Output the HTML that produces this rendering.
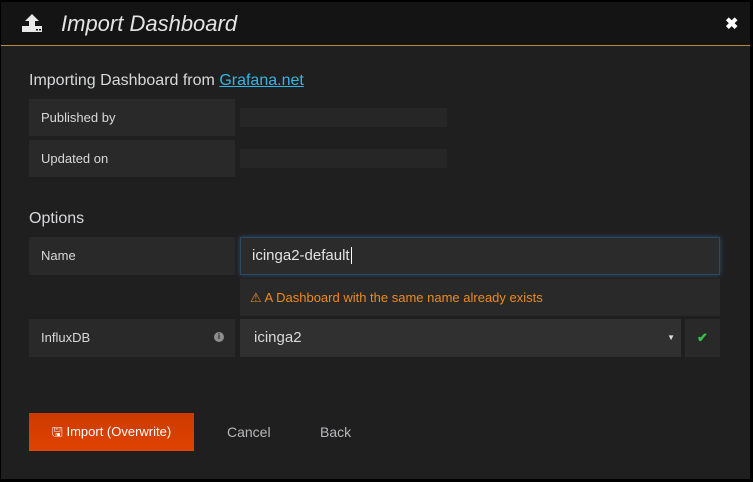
<!DOCTYPE html>
<html><head><style>
body{margin:0;width:753px;height:482px;background:#000;font-family:"Liberation Sans",sans-serif;overflow:hidden;position:relative}
.m{position:absolute;left:1px;top:2px;width:749px;height:477px;background:#1f1f20}
.h{position:absolute;left:1px;top:2px;width:749px;height:43px;background:#141414;border-bottom:1px solid #b58a3b}
.a{position:absolute}
.lab{position:absolute;left:29px;width:206px;background:#292929;color:#d8d9da;font-size:13px;box-sizing:border-box;padding-left:12px}
.box{position:absolute;background:#292929}
</style></head><body>
<div class="m"></div>
<div class="h"></div>
<svg class="a" style="left:22px;top:14px" width="20" height="20" viewBox="0 0 20 20"><path d="M10 0 L17 7 H13 V12 H7 V7 H3 Z" fill="#e8e8e8"/><rect x="0" y="12" width="20" height="6" fill="#e8e8e8"/><rect x="14" y="15" width="2" height="1.5" fill="#141414"/><rect x="17" y="15" width="2" height="1.5" fill="#141414"/></svg>
<div class="a" style="left:61px;top:11px;font-size:22px;font-style:italic;color:#e3e3e3">Import Dashboard</div>
<div class="a" style="left:725px;top:14px;font-size:16px;color:#fff;font-weight:bold">✖</div>
<div class="a" style="left:29px;top:72px;font-size:16px;color:#d8d9da">Importing Dashboard from <span style="color:#33b5e5;text-decoration:underline">Grafana.net</span></div>
<div class="lab" style="top:99px;height:37px;line-height:37px">Published by</div>
<div class="box" style="left:240px;top:108px;width:207px;height:19px;background:#262626"></div>
<div class="lab" style="top:140px;height:37px;line-height:37px">Updated on</div>
<div class="box" style="left:240px;top:149px;width:207px;height:19px;background:#262626"></div>
<div class="a" style="left:29px;top:210px;font-size:16px;color:#d8d9da">Options</div>
<div class="lab" style="top:237px;height:38px;line-height:38px">Name</div>
<div class="box" style="left:240px;top:237px;width:480px;height:38px;background:#2b2b2b;border:1px solid #2a4a66;box-sizing:border-box;box-shadow:0 0 5px rgba(82,168,236,.35);color:#e3e3e3;font-size:15px;line-height:36px;padding-left:11px">icinga2-default<span style="border-left:1px solid #fff;margin-left:1px"></span></div>
<div class="box" style="left:240px;top:279px;width:480px;height:37px;color:#ee8a1f;font-size:13px;line-height:37px;padding-left:10px;box-sizing:border-box">⚠ A Dashboard with the same name already exists</div>
<div class="lab" style="top:319px;height:38px;line-height:38px">InfluxDB<span style="position:absolute;left:185px;top:13px;width:10px;height:10px;border-radius:50%;background:#8e8e8e;color:#292929;font-size:8px;line-height:10px;text-align:center;font-weight:bold">i</span></div>
<div class="box" style="left:240px;top:319px;width:441px;height:38px;background:#303030;color:#d8d9da;font-size:15px;line-height:38px;padding-left:14px;box-sizing:border-box">icinga2<span style="position:absolute;right:6px;top:0;font-size:8px;color:#ddd">▼</span></div>
<div class="box" style="left:685px;top:319px;width:35px;height:38px;color:#3dbe4a;font-size:13px;line-height:38px;text-align:center;font-weight:bold">✔</div>
<div class="a" style="left:29px;top:413px;width:165px;height:38px;background:linear-gradient(#cc3a00,#e04300);color:#fff;font-size:13px;line-height:38px;text-align:center">🖫 Import (Overwrite)</div>
<div class="a" style="left:227px;top:424px;font-size:14px;color:#b7b8ba">Cancel</div>
<div class="a" style="left:320px;top:424px;font-size:14px;color:#b7b8ba">Back</div>
</body></html>
